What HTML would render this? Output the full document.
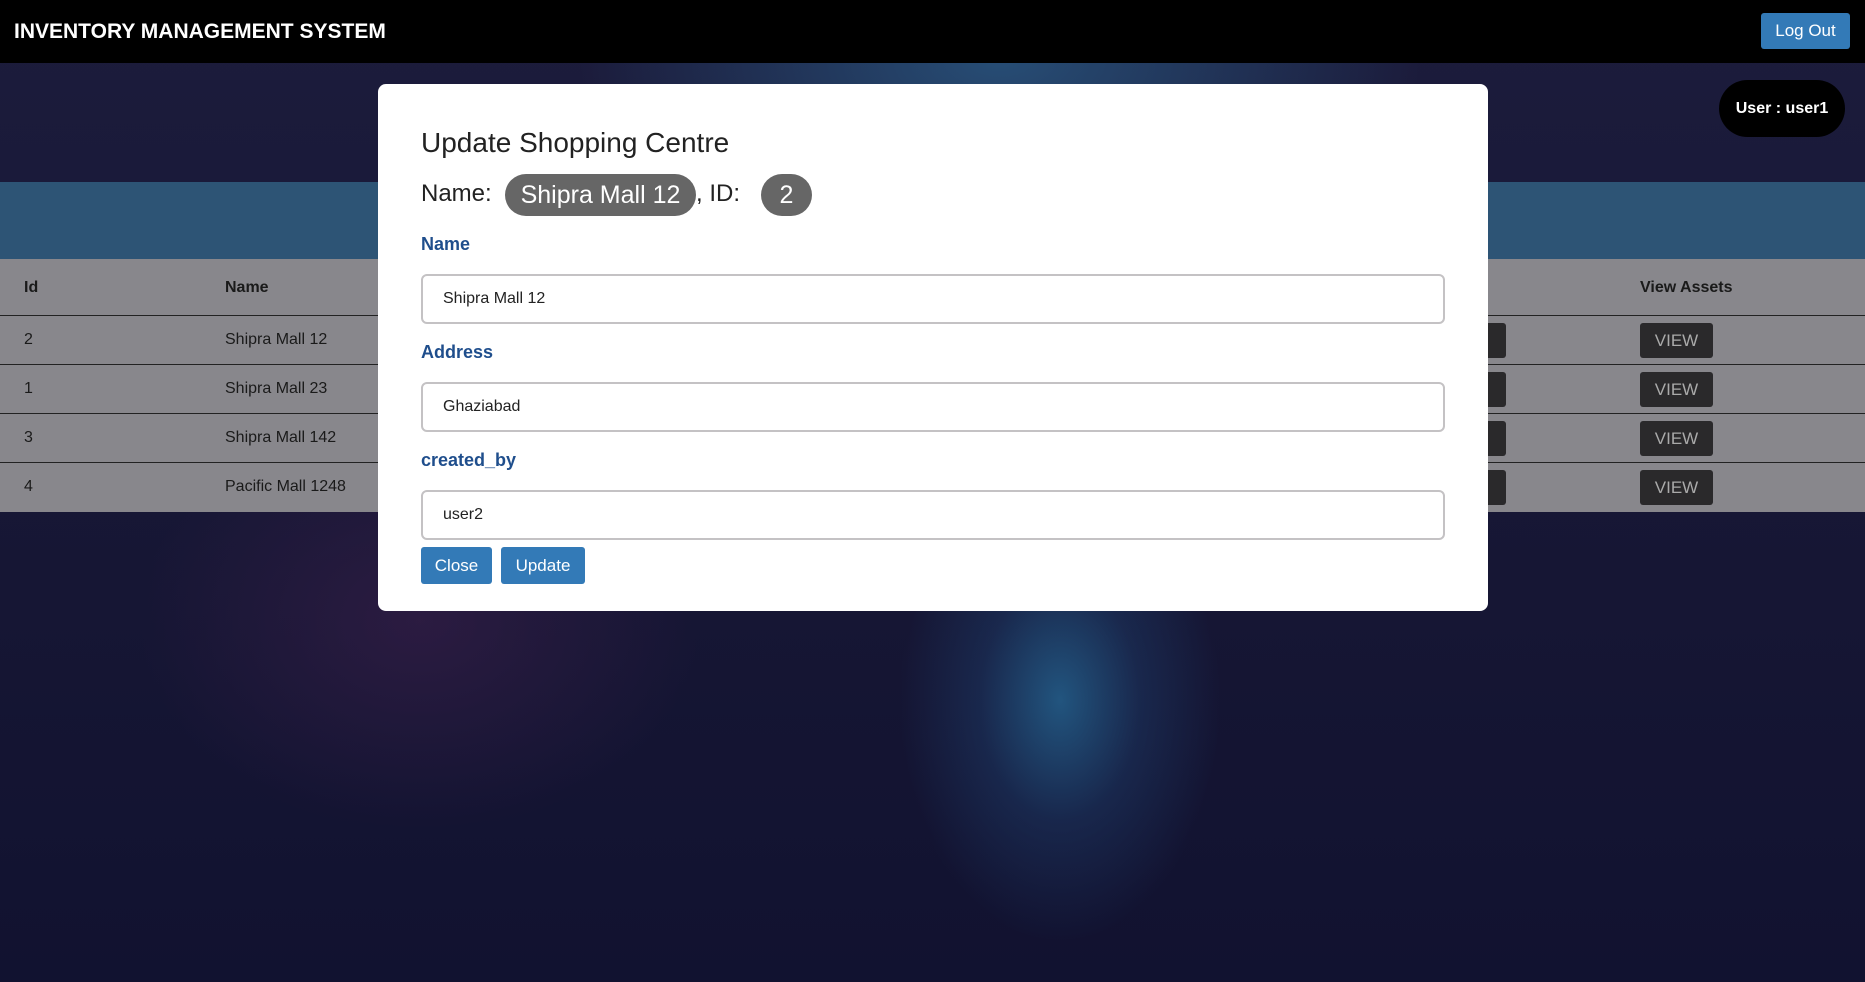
<!DOCTYPE html>
<html><head><meta charset="utf-8"><style>
*{box-sizing:border-box;margin:0;padding:0}
body{width:1865px;height:982px;overflow:hidden;font-family:"Liberation Sans",Arial,sans-serif;position:relative;
background:radial-gradient(ellipse 160px 240px at 1060px 700px,rgba(36,96,140,0.85) 0%,rgba(29,58,102,0.5) 50%,rgba(20,25,60,0) 100%),
radial-gradient(ellipse 600px 300px at 1000px 60px,rgba(42,90,132,0.8) 0%,rgba(30,40,80,0) 70%),
radial-gradient(ellipse 400px 300px at 420px 620px,rgba(58,31,74,0.6) 0%,rgba(30,20,50,0) 70%),
linear-gradient(180deg,#1c1c3c 0%,#161634 60%,#111230 100%);}
.hdr{position:absolute;left:0;top:0;width:1865px;height:63px;background:#000}
.hdr h1{position:absolute;left:14px;top:20px;color:#fff;font-size:21px;font-weight:bold}
.logout{position:absolute;left:1761px;top:13px;width:89px;height:36px;background:#337ab7;border-radius:3px;color:#fff;font-size:17px;line-height:36px;text-align:center}
.user{position:absolute;left:1719px;top:80px;width:126px;height:57px;background:#000;border-radius:29px;color:#fff;font-weight:bold;font-size:16px;line-height:57px;text-align:center}
.band{position:absolute;left:0;top:182px;width:1865px;height:77px;background:#2d5475}
.tbl{position:absolute;left:0;top:259px;width:1865px;height:253px;background:#88878c}
.row{position:absolute;left:0;width:1865px;height:49px;border-top:1.5px solid #222;font-size:16px;color:#1a1a1a}
.row span{position:absolute;top:15px}
.th{font-weight:bold}
.btn{position:absolute;top:7px;height:35px;background:#2a292b;border-radius:3px;color:#aaa;font-size:17px;line-height:35px;text-align:center}
.modal{position:absolute;left:378px;top:84px;width:1110px;height:527px;background:#fff;border-radius:8px}
.t{position:absolute;color:#222}
.pill{position:absolute;background:#666;color:#fff;border-radius:21px;font-size:25px;text-align:center;line-height:42px;height:42px}
.lbl{position:absolute;left:43px;color:#1f4e8c;font-weight:bold;font-size:18px}
.inp{position:absolute;left:43px;width:1024px;height:50px;border:2px solid #c4c2c4;border-radius:6px;font-size:16px;color:#222;padding:14px 20px}
.b{position:absolute;top:463px;height:37px;background:#337ab7;color:#fff;border-radius:3px;font-size:17px;line-height:37px;text-align:center}
</style></head><body>
<div class="hdr"><h1>INVENTORY MANAGEMENT SYSTEM</h1><div class="logout">Log Out</div></div>
<div class="user">User : user1</div>
<div class="band"></div>
<div class="tbl">
<div class="row th" style="top:0;border-top:none;height:56px"><span style="left:24px;top:20px">Id</span><span style="left:225px;top:20px">Name</span><span style="left:1640px;top:20px">View Assets</span></div>
<div class="row" style="top:56px"><span style="left:24px">2</span><span style="left:225px">Shipra Mall 12</span><div class="btn" style="left:1440px;width:66px"></div><div class="btn" style="left:1640px;width:73px">VIEW</div></div>
<div class="row" style="top:105px"><span style="left:24px">1</span><span style="left:225px">Shipra Mall 23</span><div class="btn" style="left:1440px;width:66px"></div><div class="btn" style="left:1640px;width:73px">VIEW</div></div>
<div class="row" style="top:154px"><span style="left:24px">3</span><span style="left:225px">Shipra Mall 142</span><div class="btn" style="left:1440px;width:66px"></div><div class="btn" style="left:1640px;width:73px">VIEW</div></div>
<div class="row" style="top:203px"><span style="left:24px">4</span><span style="left:225px">Pacific Mall 1248</span><div class="btn" style="left:1440px;width:66px"></div><div class="btn" style="left:1640px;width:73px">VIEW</div></div>
</div>
<div class="modal">
<div class="t" style="left:43px;top:43px;font-size:28px">Update Shopping Centre</div>
<div class="t" style="left:43px;top:96px;font-size:24px">Name:</div>
<div class="pill" style="left:127px;top:90px;width:191px">Shipra Mall 12</div>
<div class="t" style="left:318px;top:96px;font-size:24px">, ID:</div>
<div class="pill" style="left:383px;top:90px;width:51px">2</div>
<div class="lbl" style="top:150px">Name</div>
<div class="inp" style="top:190px">Shipra Mall 12</div>
<div class="lbl" style="top:258px">Address</div>
<div class="inp" style="top:298px">Ghaziabad</div>
<div class="lbl" style="top:366px">created_by</div>
<div class="inp" style="top:406px">user2</div>
<div class="b" style="left:43px;width:71px">Close</div>
<div class="b" style="left:123px;width:84px">Update</div>
</div>
</body></html>
